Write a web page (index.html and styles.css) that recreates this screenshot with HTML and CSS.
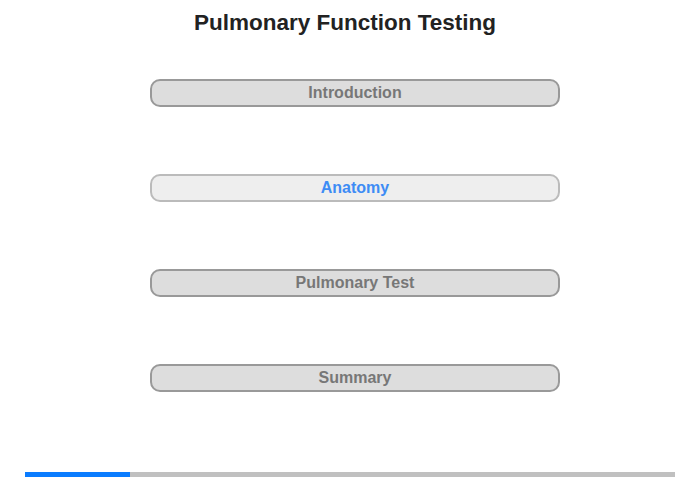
FILE: index.html
```html
<!DOCTYPE html>
<html>
<head>
<meta charset="utf-8">
<link rel="stylesheet" href="styles.css">
</head>
<body>
<div class="page">
  <h1 class="title">Pulmonary Function Testing</h1>
  <nav class="menu">
    <div class="item">Introduction</div>
    <div class="item active">Anatomy</div>
    <div class="item">Pulmonary Test</div>
    <div class="item">Summary</div>
  </nav>
  <div class="progress"><div class="fill" style="width:105px"></div></div>
</div>
</body>
</html>
```
FILE: styles.css
```css
html, body { margin: 0; padding: 0; background: #fff; }
body { font-family: "Liberation Sans", Arial, sans-serif; }
.page { width: 700px; height: 480px; position: relative; }
.title {
  margin: 0;
  padding-top: 10px;
  width: 690px;
  text-align: center;
  font-size: 22.5px;
  font-weight: bold;
  color: #222;
  line-height: 26px;
}
.menu {
  display: flex;
  flex-direction: column;
  gap: 67px;
  margin-top: 43px;
  margin-left: 150px;
  width: 410px;
}
.item {
  box-sizing: border-box;
  height: 28px;
  border: 2px solid #999;
  border-radius: 10px;
  background: #ddd;
  color: #777;
  font-size: 16px;
  font-weight: bold;
  text-align: center;
  line-height: 24px;
}
.item.active {
  background: #eee;
  border-color: #bbb;
  color: #3d8cf5;
}
.progress {
  position: absolute;
  left: 25px;
  top: 472px;
  width: 650px;
  height: 5px;
  background: #c0c0c0;
}
.fill { height: 100%; background: #0a7cff; }
```
